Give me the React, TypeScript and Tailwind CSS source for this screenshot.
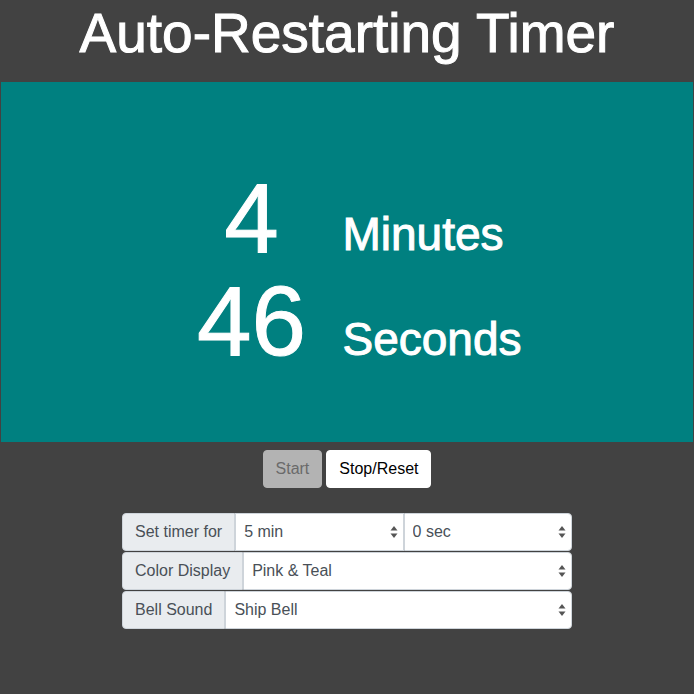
import React, { useState } from 'react';

const SelectArrows: React.FC = () => (
  <svg
    className="pointer-events-none absolute right-[6px] top-1/2 -translate-y-1/2"
    width="8"
    height="14"
    viewBox="0 0 8 14"
  >
    <path d="M4 1 L7.5 5.5 L0.5 5.5 Z" fill="#555" />
    <path d="M4 13 L7.5 8.5 L0.5 8.5 Z" fill="#555" />
  </svg>
);

type SelectProps = {
  value: string;
  options: string[];
  onChange: (v: string) => void;
  rounded?: boolean;
};

const Select: React.FC<SelectProps> = ({ value, options, onChange, rounded }) => (
  <div className="relative flex-1 min-w-0">
    <select
      value={value}
      onChange={(e) => onChange(e.target.value)}
      className={
        'h-full w-full appearance-none bg-white border border-[#ced4da] pl-[8px] pr-6 text-[16px] text-[#495057] outline-none ' +
        (rounded ? 'rounded-r-[4px]' : '')
      }
    >
      {options.map((o) => (
        <option key={o} value={o}>
          {o}
        </option>
      ))}
    </select>
    <SelectArrows />
  </div>
);

const Label: React.FC<{ children: React.ReactNode }> = ({ children }) => (
  <span className="flex items-center whitespace-nowrap rounded-l-[4px] border border-[#ced4da] bg-[#e9ecef] px-3 text-[16px] text-[#495057]">
    {children}
  </span>
);

export default function App() {
  const [mins, setMins] = useState('5 min');
  const [secs, setSecs] = useState('0 sec');
  const [color, setColor] = useState('Pink & Teal');
  const [bell, setBell] = useState('Ship Bell');

  return (
    <div
      className="min-h-screen bg-[#424242] text-white"
      style={{ fontFamily: '"Liberation Sans", Arial, sans-serif' }}
    >
      <h1 className="text-center text-[55px] leading-[66px] mb-[16px] font-normal [-webkit-text-stroke:1px_white]">
        Auto-Restarting Timer
      </h1>

      <div className="mx-px h-[360px] bg-[#008080] pt-[85px]">
        <div className="grid grid-cols-[130px_165px] items-baseline justify-center gap-x-[26px] [-webkit-text-stroke:1px_white]">
          <div className="text-center text-[98px] leading-[103px]">4</div>
          <div className="whitespace-nowrap text-[46px] leading-none -translate-y-[2px]">Minutes</div>
          <div className="text-center text-[98px] leading-[103px]">46</div>
          <div className="whitespace-nowrap text-[46px] leading-none">Seconds</div>
        </div>
      </div>

      <div className="mt-[8px] flex justify-center gap-[4px]">
        <button
          disabled
          className="h-[38px] rounded-[4px] border border-[#b3b3b3] bg-[#b3b3b3] px-3 text-[16px] text-[#6a6a6a]"
        >
          Start
        </button>
        <button className="h-[38px] rounded-[4px] border border-white bg-white px-3 text-[16px] text-black">
          Stop/Reset
        </button>
      </div>

      <div className="mx-auto mt-[25px] flex w-[450px] flex-col gap-px">
        <div className="flex h-[38px]">
          <Label>Set timer for</Label>
          <Select
            value={mins}
            onChange={setMins}
            options={['1 min', '2 min', '3 min', '4 min', '5 min', '10 min']}
          />
          <Select
            value={secs}
            onChange={setSecs}
            options={['0 sec', '15 sec', '30 sec', '45 sec']}
            rounded
          />
        </div>
        <div className="flex h-[38px]">
          <Label>Color Display</Label>
          <Select
            value={color}
            onChange={setColor}
            options={['Pink & Teal', 'Blue & Orange', 'Black & White']}
            rounded
          />
        </div>
        <div className="flex h-[38px]">
          <Label>Bell Sound</Label>
          <Select
            value={bell}
            onChange={setBell}
            options={['Ship Bell', 'Alarm', 'Chime']}
            rounded
          />
        </div>
      </div>
    </div>
  );
}
